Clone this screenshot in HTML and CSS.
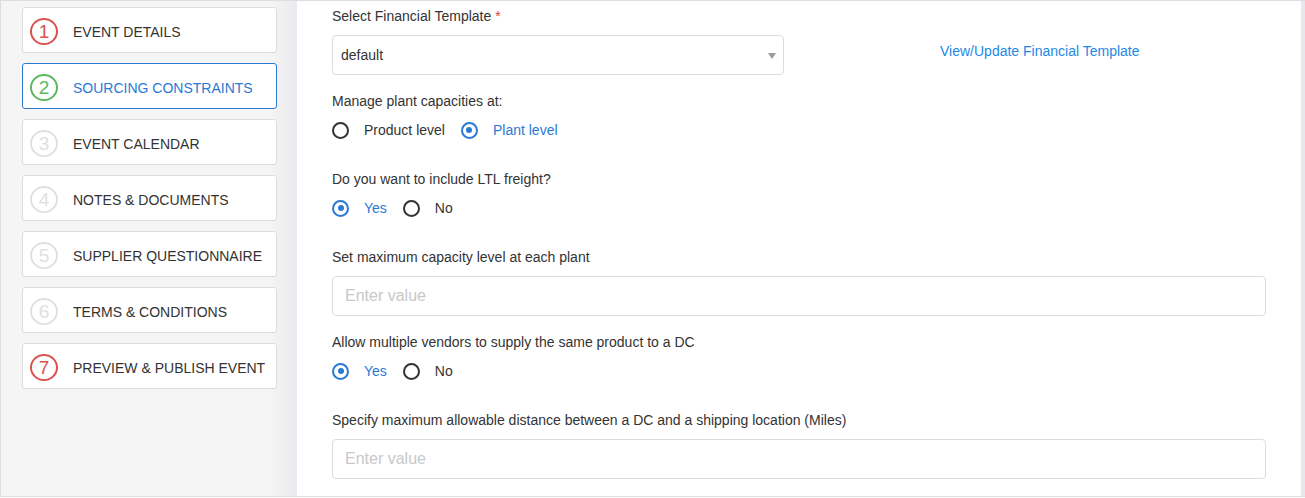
FILE: index.html
```html
<!DOCTYPE html>
<html lang="en">
<head>
<meta charset="utf-8">
<title>Sourcing Constraints</title>
<link rel="stylesheet" href="styles.css">
</head>
<body>
<div class="frame">
  <aside class="sidebar">
    <div class="step step-red"><span class="num">1</span><span class="step-label">EVENT DETAILS</span></div>
    <div class="step step-green active"><span class="num">2</span><span class="step-label">SOURCING CONSTRAINTS</span></div>
    <div class="step step-gray"><span class="num">3</span><span class="step-label">EVENT CALENDAR</span></div>
    <div class="step step-gray"><span class="num">4</span><span class="step-label">NOTES &amp; DOCUMENTS</span></div>
    <div class="step step-gray"><span class="num">5</span><span class="step-label">SUPPLIER QUESTIONNAIRE</span></div>
    <div class="step step-gray"><span class="num">6</span><span class="step-label">TERMS &amp; CONDITIONS</span></div>
    <div class="step step-red"><span class="num">7</span><span class="step-label">PREVIEW &amp; PUBLISH EVENT</span></div>
  </aside>
  <main class="content">
    <div class="field-label">Select Financial Template <span class="req">*</span></div>
    <div class="select-row">
      <div class="select"><span>default</span><span class="caret"></span></div>
      <a class="link" href="#">View/Update Financial Template</a>
    </div>

    <div class="field-label gap-s">Manage plant capacities at:</div>
    <div class="radios">
      <label class="radio"><span class="dot"></span>Product level</label>
      <label class="radio checked"><span class="dot"></span>Plant level</label>
    </div>

    <div class="field-label gap-l">Do you want to include LTL freight?</div>
    <div class="radios">
      <label class="radio checked"><span class="dot"></span>Yes</label>
      <label class="radio"><span class="dot"></span>No</label>
    </div>

    <div class="field-label gap-l">Set maximum capacity level at each plant</div>
    <div class="input">Enter value</div>

    <div class="field-label gap-s">Allow multiple vendors to supply the same product to a DC</div>
    <div class="radios">
      <label class="radio checked"><span class="dot"></span>Yes</label>
      <label class="radio"><span class="dot"></span>No</label>
    </div>

    <div class="field-label gap-l">Specify maximum allowable distance between a DC and a shipping location (Miles)</div>
    <div class="input">Enter value</div>
  </main>
  <div class="strip"></div>
</div>
</body>
</html>
```
FILE: styles.css
```css
* { box-sizing: border-box; }
html, body { margin: 0; padding: 0; background: #fff; }
body {
  font-family: "Liberation Sans", Arial, sans-serif;
  font-size: 14px;
  color: #333;
}
.frame {
  display: flex;
  width: 1305px;
  height: 497px;
  border-top: 1px solid #dedede;
  border-left: 1px solid #dedede;
  border-bottom: 1px solid #dedede;
  overflow: hidden;
}
.sidebar {
  width: 296px;
  flex: none;
  padding: 6px 0 0 21px;
  background: linear-gradient(to right, #f5f5f5 0, #f5f5f5 268px, #eaeaef 296px);
  display: flex;
  flex-direction: column;
  gap: 10px;
}
.step {
  width: 255px;
  height: 46px;
  background: #fff;
  border: 1px solid #dcdcdc;
  border-radius: 3px;
  display: flex;
  align-items: center;
  padding: 3px 0 0 7px;
}
.num {
  width: 28px;
  height: 27px;
  border: 2px solid #ddd;
  border-radius: 50%;
  display: flex;
  align-items: center;
  justify-content: center;
  font-size: 19px;
  line-height: 1;
  color: #ddd;
  flex: none;
}
.step-red .num { border-color: #dc5050; color: #dc5050; }
.step-green .num { border-color: #5cb85c; color: #5cb85c; }
.step-gray .num { border-color: #e0e0e0; color: #e0e0e0; }
.step-label {
  margin-left: 15px;
  color: #333;
}
.step.active { border-color: #2a7ad5; }
.step.active .step-label { color: #2a7ad5; }

.content {
  flex: 1;
  padding: 5px 0 0 35px;
  background: #fff;
}
.strip {
  width: 4px;
  flex: none;
  background: #e7e7ec;
}
.field-label {
  line-height: 20px;
  color: #333;
}
.req { color: #e53935; }
.gap-s { margin-top: 16px; }
.gap-l { margin-top: 29px; }
.select-row {
  display: flex;
  align-items: center;
  margin-top: 9px;
}
.select {
  width: 452px;
  height: 40px;
  border: 1px solid #dcdcdc;
  border-radius: 4px;
  display: flex;
  align-items: center;
  justify-content: space-between;
  padding: 0 7px 0 8px;
  color: #333;
}
.caret {
  width: 0;
  height: 0;
  border-left: 4px solid transparent;
  border-right: 4px solid transparent;
  border-top: 6px solid #9a9a9a;
  margin-top: 1px;
}
.link {
  margin-left: 156px;
  margin-top: -8px;
  color: #1e88e5;
  text-decoration: none;
}
.radios {
  display: flex;
  gap: 16px;
  margin-top: 9px;
  height: 20px;
  align-items: center;
}
.radio {
  display: flex;
  align-items: center;
  color: #333;
}
.dot {
  width: 17px;
  height: 17px;
  border: 2px solid #333;
  border-radius: 50%;
  margin-right: 15px;
  display: flex;
  align-items: center;
  justify-content: center;
}
.radio.checked { color: #2a7ad5; }
.radio.checked .dot { border-color: #2a7ad5; }
.radio.checked .dot::after {
  content: "";
  width: 6px;
  height: 6px;
  border-radius: 50%;
  background: #2a7ad5;
}
.input {
  width: 934px;
  height: 40px;
  margin-top: 9px;
  border: 1px solid #dcdcdc;
  border-radius: 4px;
  padding-left: 12px;
  display: flex;
  align-items: center;
  font-size: 16px;
  color: #c8c8c8;
}
```
